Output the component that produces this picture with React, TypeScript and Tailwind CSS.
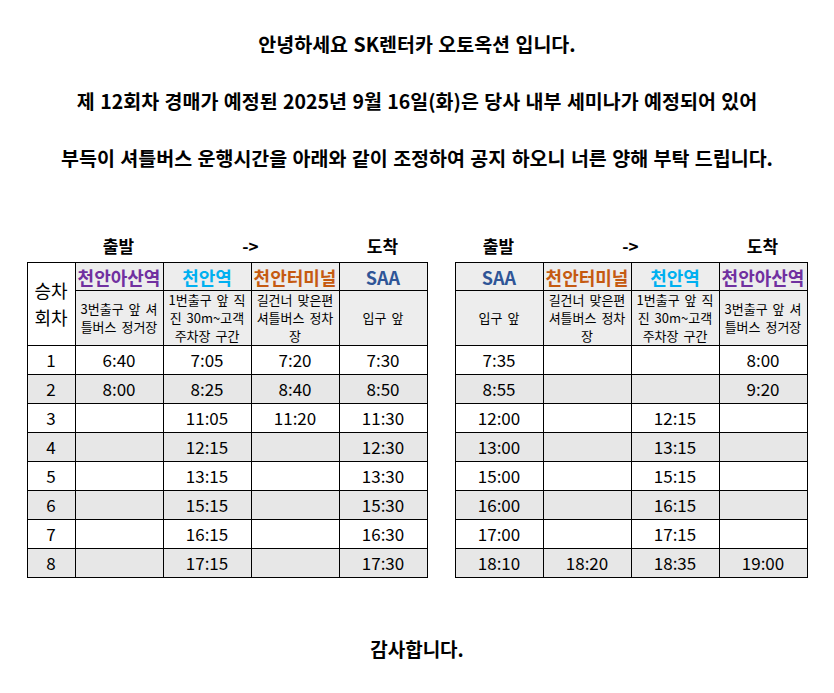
import React from 'react';

const FONT = "font-['Noto_Sans_CJK_KR','Noto_Sans',sans-serif]";

type Station = { name: string; color: string; note: string[] };

const outbound: Station[] = [
  { name: '천안아산역', color: 'text-[#7030a0]', note: ['3번출구 앞 셔', '틀버스 정거장'] },
  { name: '천안역', color: 'text-[#00b0f0]', note: ['1번출구 앞 직', '진 30m~고객', '주차장 구간'] },
  { name: '천안터미널', color: 'text-[#c55a11]', note: ['길건너 맞은편', '셔틀버스 정차', '장'] },
  { name: 'SAA', color: 'text-[#2f5597]', note: ['입구 앞'] },
];

const inbound: Station[] = [...outbound].reverse();

const leftRows = [
  ['6:40', '7:05', '7:20', '7:30'],
  ['8:00', '8:25', '8:40', '8:50'],
  ['', '11:05', '11:20', '11:30'],
  ['', '12:15', '', '12:30'],
  ['', '13:15', '', '13:30'],
  ['', '15:15', '', '15:30'],
  ['', '16:15', '', '16:30'],
  ['', '17:15', '', '17:30'],
];

const rightRows = [
  ['7:35', '', '', '8:00'],
  ['8:55', '', '', '9:20'],
  ['12:00', '', '12:15', ''],
  ['13:00', '', '13:15', ''],
  ['15:00', '', '15:15', ''],
  ['16:00', '', '16:15', ''],
  ['17:00', '', '17:15', ''],
  ['18:10', '18:20', '18:35', '19:00'],
];

function Labels({ lead }: { lead: boolean }) {
  return (
    <div className="flex h-6 items-center text-[17px] font-bold leading-6">
      {lead && <div className="w-[48px]" />}
      <div className="w-[88px] text-center">출발</div>
      <div className="w-[176px] text-center">-&gt;</div>
      <div className="w-[88px] text-center">도착</div>
    </div>
  );
}

function Timetable({ stations, rows, lead }: { stations: Station[]; rows: string[][]; lead: boolean }) {
  return (
    <div className="flex flex-col gap-1">
      <Labels lead={lead} />
      <table className="border-collapse table-fixed">
        <colgroup>
          {lead && <col className="w-[48px]" />}
          {stations.map((s) => (
            <col key={s.name} className="w-[88px]" />
          ))}
        </colgroup>
        <thead>
          <tr className="h-[28px]">
            {lead && (
              <th rowSpan={2} className="border border-black bg-white p-0 text-[18px] font-normal leading-[27px]">
                승차
                <br />
                회차
              </th>
            )}
            {stations.map((s) => (
              <th
                key={s.name}
                className={`border border-black bg-[#ededed] p-0 text-[18px] font-bold leading-5 whitespace-nowrap ${s.color}`}
              >
                {s.name}
              </th>
            ))}
          </tr>
          <tr className="h-[54px]">
            {stations.map((s) => (
              <th
                key={s.name}
                className="border border-black bg-[#ededed] px-0 py-0 text-[13px] font-normal leading-[18px] whitespace-nowrap [word-spacing:2px]"
              >
                {s.note.map((line, i) => (
                  <div key={i}>{line}</div>
                ))}
              </th>
            ))}
          </tr>
        </thead>
        <tbody>
          {rows.map((r, i) => (
            <tr key={i} className={`h-[29px] ${i % 2 === 1 ? 'bg-[#e7e7e7]' : 'bg-white'}`}>
              {lead && <td className="border border-black p-0 text-center text-[17px] leading-5">{i + 1}</td>}
              {r.map((c, j) => (
                <td key={j} className="border border-black p-0 text-center text-[17px] leading-5">
                  {c}
                </td>
              ))}
            </tr>
          ))}
        </tbody>
      </table>
    </div>
  );
}

export default function App() {
  return (
    <main className={`min-h-[693px] w-full bg-white text-black ${FONT} flex flex-col items-center`}>
      <div className="pt-[32px] flex flex-col items-center gap-[33px] text-[19.5px] font-bold leading-6 [word-spacing:1px]">
        <p>안녕하세요 SK렌터카 오토옥션 입니다.</p>
        <p>제 12회차 경매가 예정된 2025년 9월 16일(화)은 당사 내부 세미나가 예정되어 있어</p>
        <p>부득이 셔틀버스 운행시간을 아래와 같이 조정하여 공지 하오니 너른 양해 부탁 드립니다.</p>
      </div>

      <div className="mt-[64px] flex items-start gap-[27px]">
        <Timetable stations={outbound} rows={leftRows} lead />
        <Timetable stations={inbound} rows={rightRows} lead={false} />
      </div>

      <p className="mt-[59px] text-[19px] font-bold leading-6">감사합니다.</p>
    </main>
  );
}
